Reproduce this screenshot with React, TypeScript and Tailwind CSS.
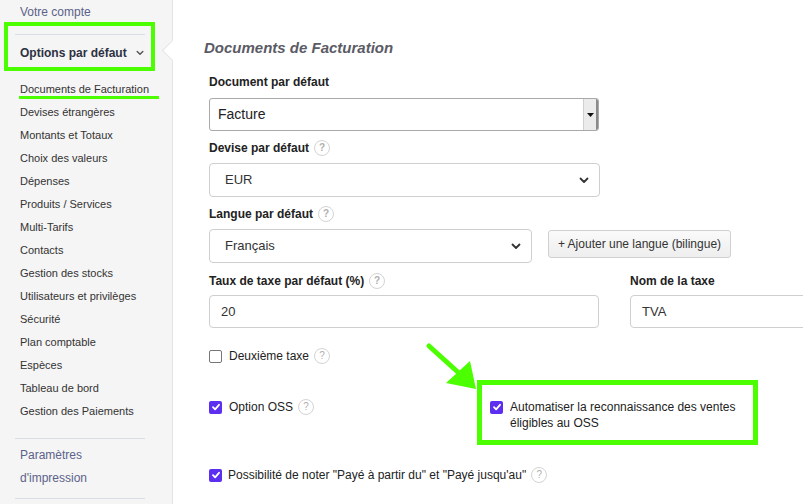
import React from 'react';

const menuItems = [
  'Devises étrangères',
  'Montants et Totaux',
  'Choix des valeurs',
  'Dépenses',
  'Produits / Services',
  'Multi-Tarifs',
  'Contacts',
  'Gestion des stocks',
  'Utilisateurs et privilèges',
  'Sécurité',
  'Plan comptable',
  'Espèces',
  'Tableau de bord',
  'Gestion des Paiements',
];

function Help() {
  return (
    <span className="ml-[5px] inline-flex h-[16px] w-[16px] items-center justify-center rounded-full border border-[#d4d4d4] text-[10px] leading-none text-[#b0b0b0]">
      ?
    </span>
  );
}

function Check({ checked }: { checked?: boolean }) {
  if (!checked) {
    return <span className="inline-block h-[13px] w-[13px] shrink-0 rounded-[2px] border border-[#767676] bg-white" />;
  }
  return (
    <span className="inline-flex h-[13px] w-[13px] shrink-0 items-center justify-center rounded-[2px] bg-[#5b2ef0]">
      <svg width="10" height="10" viewBox="0 0 10 10" fill="none">
        <path d="M2 5.2 L4.1 7.3 L8 2.8" stroke="white" strokeWidth="1.8" strokeLinecap="round" strokeLinejoin="round" />
      </svg>
    </span>
  );
}

function Chevron({ small }: { small?: boolean }) {
  return (
    <svg width={small ? 8 : 10} height={small ? 6 : 7} viewBox="0 0 10 7" fill="none">
      <path d="M1.5 1.5 L5 5 L8.5 1.5" stroke={small ? '#555' : '#333'} strokeWidth="1.8" strokeLinecap="round" strokeLinejoin="round" />
    </svg>
  );
}

function Label({ children, help }: { children: React.ReactNode; help?: boolean }) {
  return (
    <div className="flex h-[16px] items-center text-[12px] font-bold text-[#222]">
      {children}
      {help && <Help />}
    </div>
  );
}

export default function App() {
  return (
    <div
      className="relative flex h-[504px] w-[803px] overflow-hidden bg-white"
      style={{ fontFamily: '"Liberation Sans", Arial, sans-serif' }}
    >
      {/* Sidebar */}
      <aside className="relative w-[173px] shrink-0 border-r border-[#e3e3e3] bg-[#f5f5f5]">
        <div className="pl-[20px] pt-[1px] text-[12px] leading-[23px] text-[#5c6289]">Votre compte</div>
        <div className="ml-[15px] mr-[27px] mt-[10px] h-px bg-[#d9dde5]" />
        <div className="mt-[6px] flex h-[23px] items-center pl-[20px] pr-[28px] text-[12px] font-bold text-[#2d3142]">
          <span className="flex-1">Options par défaut</span>
          <Chevron small />
        </div>
        <div className="mt-[14px] pl-[20px] text-[11px] leading-[23px] text-[#333]">
          <div>Documents de Facturation</div>
          {menuItems.map((item) => (
            <div key={item}>{item}</div>
          ))}
        </div>
        <div className="ml-[15px] mr-[27px] mt-[15px] h-px bg-[#d9dde5]" />
        <div className="mt-[5px] pl-[20px] text-[12px] leading-[23px] text-[#5c6289]">
          <div>Paramètres</div>
          <div>d'impression</div>
        </div>
        <div className="ml-[15px] mr-[27px] mt-[8px] h-px bg-[#d9dde5]" />

        {/* notch */}
        <div className="absolute right-[-8px] top-[43px] h-[15px] w-[15px] rotate-45 border-b border-l border-[#e3e3e3] bg-white" />
      </aside>

      {/* Main */}
      <main className="flex-1 pt-[38px]">
        <h1 className="ml-[31px] text-[15px] font-bold italic leading-[20px] text-[#5b5b66]">Documents de Facturation</h1>

        <div className="pl-[36px]">
          <div className="mt-[16px]">
            <Label>Document par défaut</Label>
            <div className="mt-[8px] flex h-[33px] w-[390px] items-stretch overflow-hidden rounded-[3px] border border-[#a9a9a9]">
              <div className="flex flex-1 items-center pl-[8px] text-[14px] text-[#222]">Facture</div>
              <div className="flex w-[15px] items-center justify-center border-l border-r-2 border-[#8a8a8a] border-l-[#d0d0d0] bg-[#ebebeb]">
                <svg width="7" height="4" viewBox="0 0 7 4">
                  <path d="M0 0 H7 L3.5 4 Z" fill="#111" />
                </svg>
              </div>
            </div>
          </div>

          <div className="mt-[9px]">
            <Label help>Devise par défaut</Label>
            <div className="mt-[7px] flex h-[34px] w-[391px] items-center justify-between rounded-[4px] border border-[#cfcfcf] pl-[15px] pr-[10px] text-[13px] text-[#333]">
              <span>EUR</span>
              <Chevron />
            </div>
          </div>

          <div className="mt-[9px]">
            <Label help>Langue par défaut</Label>
            <div className="mt-[7px] flex items-start gap-[16px]">
              <div className="flex h-[34px] w-[323px] items-center justify-between rounded-[4px] border border-[#cfcfcf] pl-[15px] pr-[10px] text-[13px] text-[#333]">
                <span>Français</span>
                <Chevron />
              </div>
              <div className="mt-px flex h-[28px] w-[183px] items-center justify-center rounded-[3px] border border-[#d0d0d0] bg-gradient-to-b from-[#fafafa] to-[#eeeeee] text-[12px] text-[#333]">
                + Ajouter une langue (bilingue)
              </div>
            </div>
          </div>

          <div className="mt-[10px] flex gap-[31px]">
            <div className="w-[390px] shrink-0">
              <Label help>Taux de taxe par défaut (%)</Label>
              <div className="mt-[6px] flex h-[33px] items-center rounded-[4px] border border-[#cfcfcf] pl-[11px] text-[13px] text-[#333]">
                20
              </div>
            </div>
            <div className="w-[220px] shrink-0">
              <Label>Nom de la taxe</Label>
              <div className="mt-[6px] flex h-[33px] items-center rounded-[4px] border border-[#cfcfcf] pl-[11px] text-[13px] text-[#333]">
                TVA
              </div>
            </div>
          </div>

          <div className="mt-[20px] flex h-[16px] items-center text-[12px] text-[#222]">
            <Check />
            <span className="ml-[7px]">Deuxième taxe</span>
            <Help />
          </div>

          <div className="mt-[35px] flex items-start">
            <div className="flex h-[16px] w-[281px] shrink-0 items-center text-[12px] text-[#222]">
              <Check checked />
              <span className="ml-[7px]">Option OSS</span>
              <Help />
            </div>
            <div className="flex items-start text-[12px] leading-[16px] text-[#222]">
              <span className="mt-[1px]">
                <Check checked />
              </span>
              <span className="ml-[7px]">
                Automatiser la reconnaissance des ventes
                <br />
                éligibles au OSS
              </span>
            </div>
          </div>

          <div className="mt-[36px] flex h-[16px] items-center text-[12px] text-[#222]">
            <Check checked />
            <span className="ml-[6px]">Possibilité de noter "Payé à partir du" et "Payé jusqu'au"</span>
            <Help />
          </div>
        </div>
      </main>

      {/* Annotations */}
      <div className="pointer-events-none absolute left-[4px] top-[22px] h-[49px] w-[151px] border-4 border-[#4cff00]" />
      <div className="pointer-events-none absolute left-[19px] top-[96px] h-[3px] w-[140px] bg-[#4cff00]" />
      <div className="pointer-events-none absolute left-[477px] top-[380px] h-[65px] w-[281px] border-[5px] border-[#4cff00]" />
      <svg className="pointer-events-none absolute left-0 top-0" width="803" height="504" viewBox="0 0 803 504">
        <line x1="429" y1="346" x2="460" y2="374" stroke="#4cff00" strokeWidth="5" strokeLinecap="round" />
        <polygon points="446,383 470,361 476,389" fill="#4cff00" />
      </svg>
    </div>
  );
}
